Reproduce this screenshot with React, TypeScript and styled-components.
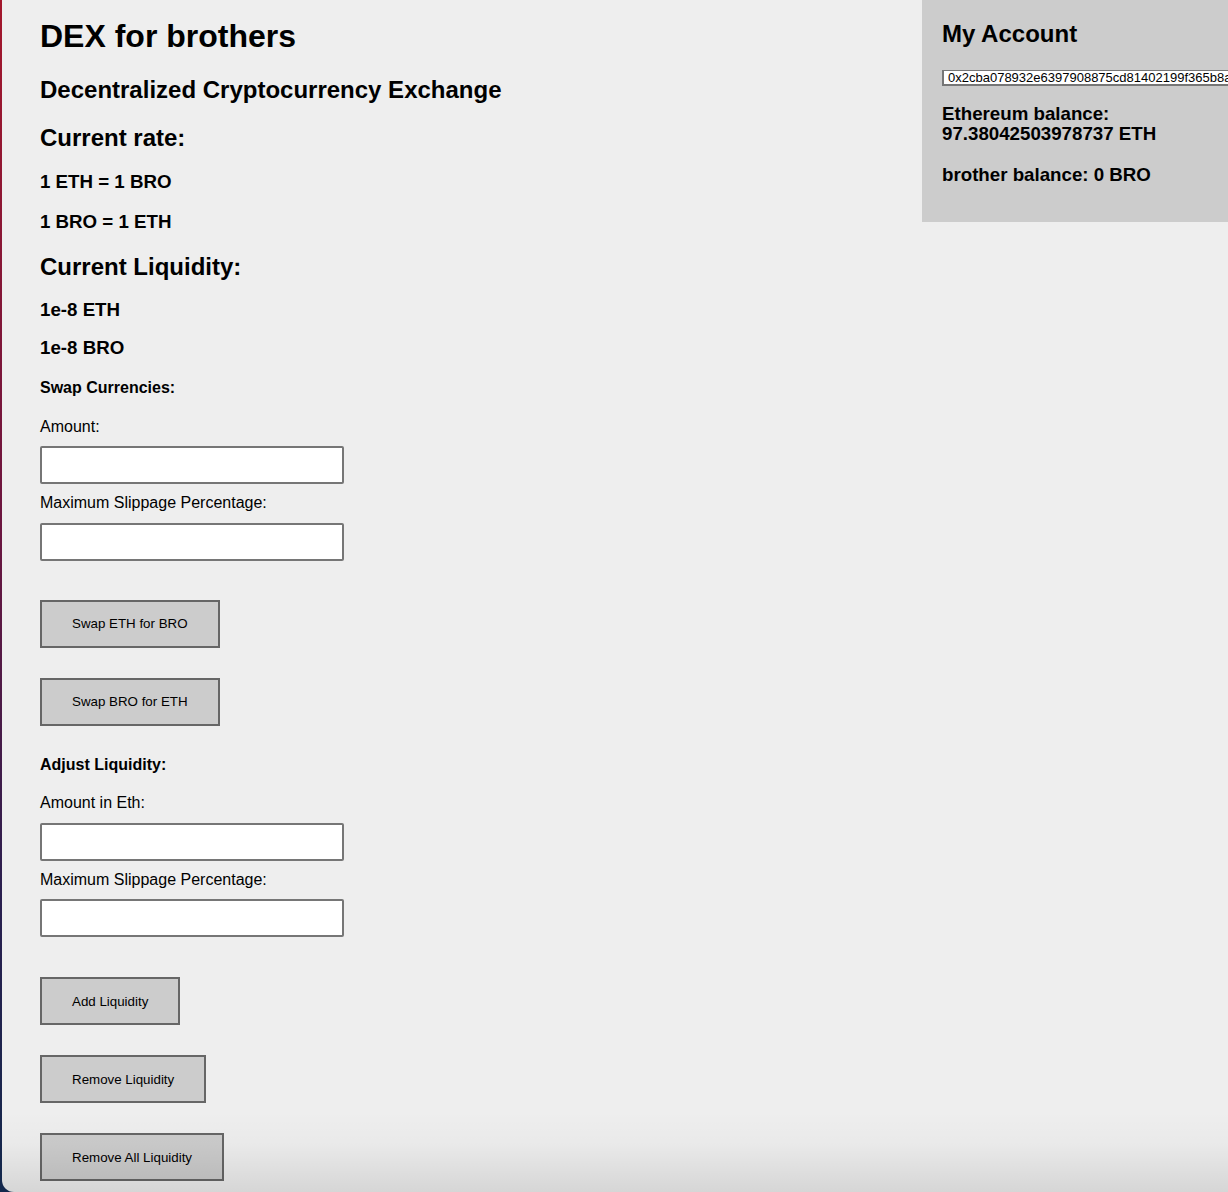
import React from 'react'
import styled, { createGlobalStyle } from 'styled-components'

const GlobalStyle = createGlobalStyle`
	html,
	body {
		margin: 0;
		height: 100%;
	}
	body {
		background: linear-gradient(180deg, #a3172c 0%, #6a1640 45%, #2a1f4f 75%, #13284c 100%);
		font-family: 'Liberation Sans', Arial, sans-serif;
		color: #000;
		overflow: hidden;
	}
	#root {
		height: 100%;
	}
`

const Window = styled.div`
	display: flex;
	align-items: flex-start;
	height: 100%;
	margin-left: 2px;
	background: #eeeeee;
	border-bottom-left-radius: 12px;
	overflow: hidden;
	position: relative;
`

const Main = styled.main`
	flex: 1;
	display: flex;
	flex-direction: column;
	align-items: flex-start;
	padding: 18px 0 0 38px;
`

const Title = styled.h1<{ $top?: number }>`
	margin: ${p => p.$top ?? 0}px 0 0;
	font-size: 32px;
	font-weight: 700;
	line-height: 37px;
`

const Heading = styled.h2<{ $top?: number }>`
	margin: ${p => p.$top ?? 0}px 0 0;
	font-size: 24px;
	font-weight: 700;
	line-height: 27.6px;
`

const Value = styled.h3<{ $top?: number }>`
	margin: ${p => p.$top ?? 0}px 0 0;
	font-size: 18.72px;
	font-weight: 700;
	line-height: 21.5px;
`

const SubHeading = styled.h4<{ $top?: number }>`
	margin: ${p => p.$top ?? 0}px 0 0;
	font-size: 16px;
	font-weight: 700;
	line-height: 18.4px;
`

const Label = styled.label<{ $top?: number }>`
	display: block;
	margin-top: ${p => p.$top ?? 10}px;
	font-size: 16px;
	line-height: 18.4px;
`

const Input = styled.input`
	display: block;
	box-sizing: border-box;
	width: 304px;
	height: 38px;
	margin-top: 10px;
	padding: 0 8px;
	border: 2px solid #767676;
	border-radius: 2px;
	background: #fff;
	font: 16px 'Liberation Sans', Arial, sans-serif;
`

const Button = styled.button<{ $top?: number }>`
	display: block;
	box-sizing: border-box;
	height: 48px;
	margin-top: ${p => p.$top ?? 30}px;
	padding: 0 30px;
	border: 2px solid #666;
	background: #cccccc;
	color: #000;
	font: 13.33px 'Liberation Sans', Arial, sans-serif;
	cursor: pointer;
`

const Account = styled.aside`
	flex: 0 0 306px;
	box-sizing: border-box;
	height: 222px;
	padding: 20px 0 0 20px;
	background: #cccccc;
	overflow: hidden;
`

const Address = styled.input`
	display: block;
	box-sizing: border-box;
	width: 360px;
	height: 16px;
	margin-top: 22px;
	padding: 0 4px;
	border: 2px solid #767676;
	border-width: 1px 1px 2px 2px;
	background: #fff;
	font: 13px 'Liberation Sans', Arial, sans-serif;
	color: #000;
`

const Balance = styled.p<{ $top?: number }>`
	margin: ${p => p.$top ?? 0}px 0 0;
	font-size: 18.72px;
	font-weight: 700;
	line-height: 20px;
`

const BottomShade = styled.div`
	position: absolute;
	left: 0;
	right: 0;
	bottom: 0;
	height: 80px;
	background: linear-gradient(180deg, rgba(0, 0, 0, 0) 0%, rgba(0, 0, 0, 0.02) 40%, rgba(0, 0, 0, 0.1) 100%);
	pointer-events: none;
`

export default function App() {
	return (
		<>
			<GlobalStyle />
			<Window>
				<Main>
					<Title>DEX for brothers</Title>
					<Heading $top={21}>Decentralized Cryptocurrency Exchange</Heading>

					<Heading $top={20}>Current rate:</Heading>
					<Value $top={20}>1 ETH = 1 BRO</Value>
					<Value $top={18.5}>1 BRO = 1 ETH</Value>

					<Heading $top={20}>Current Liquidity:</Heading>
					<Value $top={18.5}>1e-8 ETH</Value>
					<Value $top={17}>1e-8 BRO</Value>

					{/* swap */}
					<SubHeading $top={20}>Swap Currencies:</SubHeading>
					<Label $top={20.5}>Amount:</Label>
					<Input type='text' />
					<Label>Maximum Slippage Percentage:</Label>
					<Input type='text' />
					<Button $top={39}>Swap ETH for BRO</Button>
					<Button>Swap BRO for ETH</Button>

					{/* liquidity */}
					<SubHeading $top={30}>Adjust Liquidity:</SubHeading>
					<Label $top={20.5}>Amount in Eth:</Label>
					<Input type='text' />
					<Label>Maximum Slippage Percentage:</Label>
					<Input type='text' />
					<Button $top={40}>Add Liquidity</Button>
					<Button>Remove Liquidity</Button>
					<Button>Remove All Liquidity</Button>
				</Main>

				<Account>
					<Heading>My Account</Heading>
					<Address readOnly value='0x2cba078932e6397908875cd81402199f365b8a1f' />
					<Balance $top={18}>
						Ethereum balance:
						<br />
						97.38042503978737 ETH
					</Balance>
					<Balance $top={21}>brother balance: 0 BRO</Balance>
				</Account>

				<BottomShade />
			</Window>
		</>
	)
}
